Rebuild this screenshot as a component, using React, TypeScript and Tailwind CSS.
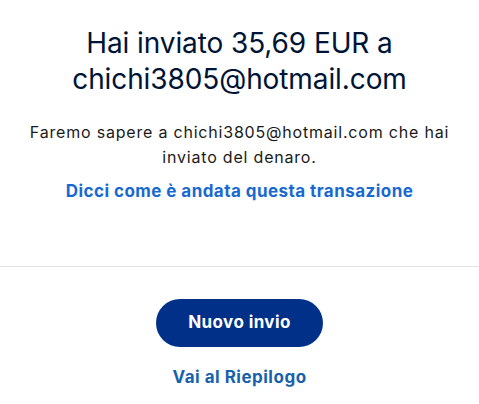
import React from "react";

export default function App() {
  return (
    <div
      className="w-[479px] h-[404px] bg-white flex flex-col items-center text-center"
      style={{ fontFamily: "Inter, 'Noto Sans', sans-serif" }}
    >
      <h1 className="mt-[25px] text-[28px] leading-[36px] text-[#001435] font-normal tracking-[-0.1px]">
        Hai inviato 35,69 EUR a
        <br />
        chichi3805@hotmail.com
      </h1>
      <p className="mt-[23px] text-[16px] leading-[25px] tracking-[0.8px] text-[#1a1a1a] whitespace-nowrap">
        Faremo sapere a chichi3805@hotmail.com che hai
        <br />
        inviato del denaro.
      </p>
      <a className="mt-[9px] text-[17px] leading-[24px] font-bold tracking-[0.45px] text-[#1769d1] whitespace-nowrap">
        Dicci come è andata questa transazione
      </a>
      <div className="mt-[63px] w-full h-px bg-[#e3e3e3]" />
      <button className="mt-[32px] w-[167px] h-[48px] rounded-full bg-[#003087] text-white text-[17px] font-bold tracking-[0.4px]">
        Nuovo invio
      </button>
      <a className="mt-[18px] text-[17px] leading-[24px] font-bold tracking-[0.5px] text-[#1762ab]">
        Vai al Riepilogo
      </a>
    </div>
  );
}
